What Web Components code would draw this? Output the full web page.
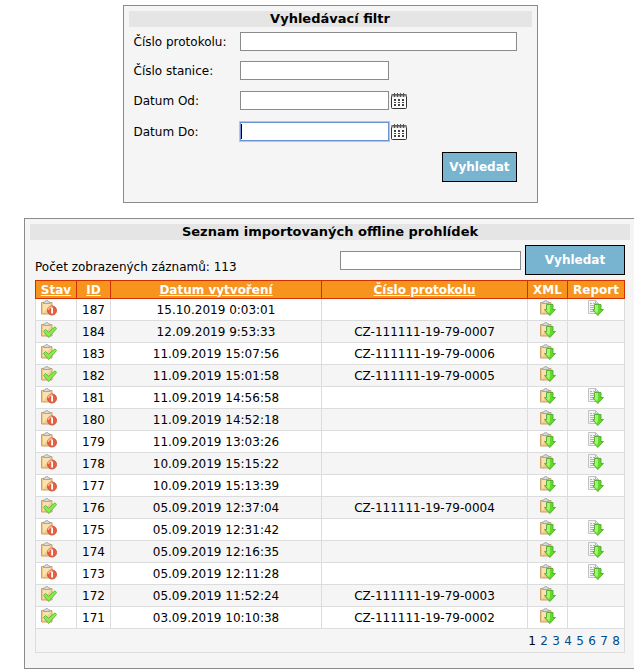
<!DOCTYPE html>
<html lang="cs">
<head>
<meta charset="utf-8">
<title>Offline prohlídky</title>
<style>
    body {
        margin: 0;
        background: #fff;
        color: #000;
        font: 12px/16px Verdana, 'DejaVu Sans', sans-serif;
        overflow-x: hidden;
    }
</style>
</head>
<body>
<offline-page></offline-page>

<script>
/**
 * all icons live on a 16x16 canvas
 */
const clipboard = `
    <path d="M.5 2.500h10.500v11.500H.5z" fill="#f0c987" stroke="#cda06a"/>
    <path d="M2 4h8v9H2z" fill="#fae2b0"/>
    <path d="M2 13l8-9v9z" fill="#f2cd8c"/>
    <path d="M2.500 3.500v-1.500h1.500q.2-1.500 1.700-1.500t1.800 1.500h1.500v1.500z" fill="#dcdee0" stroke="#a3a7ab"/>`

const arrow = `
    <path d="M6.500 4.500h6.500v5h2.500L9.800 15.500 4.500 9.500h2z" fill="#5fdc22" stroke="#5aae3c"/>
    <path d="M7 5h3v5.500l-1 3L6 10h1z" fill="#a4f375"/>`

const icons = {
    error: `${clipboard}
        <circle cx="11" cy="10.500" r="4.500" fill="#e6603f" stroke="#d1553b"/>
        <path d="M7.300 10q.4-3 3.700-3.200" fill="none" stroke="#f6b09c" stroke-width="1.500"/>
        <path d="M10.200 7.500h1.800v6h-1.800z" fill="#fff"/>`,
    ok: `${clipboard}
        <path d="M2.500 9.500l2-2 3 2.800 6.500-5.500 1.600 1.700-8 9z" fill="#86ee48" stroke="#62b840"/>`,
    xml: clipboard + arrow,
    report: `
        <path d="M.5.500h7l3 3v10H.5z" fill="#f4f4f4" stroke="#c2c2c2"/>
        <path d="M2 3.500h2M5 3.500h2M2 5.500h4M2 7.500h4M2 9.500h2M2 11.500h4" stroke="#b3b3b3"/>
        <path d="M7.500.500v3h3" fill="none" stroke="#b3b3b3"/>
        ${arrow}`,
    calendar: `
        <rect x=".5" y="1.500" width="15" height="14" rx="1" fill="#fafafa" stroke="#333"/>
        <path d="M0 2.500h16" stroke="#8a8a8a" stroke-width="2"/>
        <path d="M3.500 0v4M6.500 0v4M9.500 0v4M12.500 0v4" stroke="#555"/>
        <path d="M3 6h2v2H3zM7 6h2v2H7zM11 6h2v2h-2zM3 9h2v1H3zM7 9h2v1H7zM11 9h2v1h-2zM3 11h2v2H3zM7 11h2v2H7zM11 11h2v2h-2z" fill="#444"/>`
}

class AppIcon extends HTMLElement {
    connectedCallback() {
        this.attachShadow({ mode: 'open' })
        this.shadowRoot.innerHTML = `
            <style>
                :host { display: block; width: 16px; height: 16px; }
                svg { display: block; width: 100%; height: 100%; }
            </style>
            <svg viewBox="0 0 16 16" aria-hidden="true">${icons[this.getAttribute('name')]}</svg>
        `
    }
}

/**
 * grey box with a title bar, content comes through the slot
 */
class TitledPanel extends HTMLElement {
    connectedCallback() {
        this.attachShadow({ mode: 'open' })
        this.shadowRoot.innerHTML = `
            <style>
                :host {
                    display: block;
                    box-sizing: border-box;
                    border: 1px solid #8b8b8d;
                    background: #f5f5f5;
                    padding: 5px;
                }
                h2 {
                    margin: 0;
                    background: #e5e5e5;
                    font-size: 13px;
                    line-height: 16px;
                    text-align: center;
                }
            </style>
            <h2>${this.getAttribute('heading')}</h2>
            <slot></slot>
        `
    }
}

/* controls used by both forms */
const controls = `
    input {
        box-sizing: border-box;
        height: 19px;
        margin: 0;
        padding: 1px;
        border: 1px solid #8b8b8d;
        background: #fff;
        font: inherit;
    }
    .search {
        box-sizing: border-box;
        height: 30px;
        padding: 0 6px;
        border: 1px solid #000;
        background: #78b3d0;
        color: #fff;
        font: bold 12px/16px Verdana, 'DejaVu Sans', sans-serif;
        cursor: pointer;
    }
`

class FilterForm extends HTMLElement {
    connectedCallback() {
        this.attachShadow({ mode: 'open' })
        this.shadowRoot.innerHTML = `
            <style>
                ${controls}
                :host { display: block; padding: 0 15px 15px 5px; }
                .row {
                    display: grid;
                    grid-template-columns: 104px auto 16px 1fr;
                    align-items: center;
                    column-gap: 2px;
                    height: 29px;
                }
                .row.date { height: 31px; }
                .short { width: 149px; }
                .long { grid-column: 2 / -1; }
                .pick { padding: 0; border: 0; background: none; cursor: pointer; }
                /* the field being edited, with its caret */
                .active {
                    border-color: #6a92d4;
                    outline: 1px solid #a6c8fa;
                    background: linear-gradient(#000, #000) 0 1px / 1px 15px no-repeat #fff;
                }
                .actions { display: flex; justify-content: flex-end; padding-top: 5px; }
            </style>
            <div class="row">
                <label for="protocol">Číslo protokolu:</label>
                <input class="long" id="protocol">
            </div>
            <div class="row">
                <label for="station">Číslo stanice:</label>
                <input class="short" id="station">
            </div>
            <div class="row date">
                <label for="from">Datum Od:</label>
                <input class="short" id="from">
                <button class="pick" aria-label="Datum Od"><app-icon name="calendar"></app-icon></button>
            </div>
            <div class="row date">
                <label for="to">Datum Do:</label>
                <input class="short active" id="to">
                <button class="pick" aria-label="Datum Do"><app-icon name="calendar"></app-icon></button>
            </div>
            <div class="actions"><button class="search">Vyhledat</button></div>
        `
    }
}

class ListToolbar extends HTMLElement {
    connectedCallback() {
        this.attachShadow({ mode: 'open' })
        this.shadowRoot.innerHTML = `
            <style>
                ${controls}
                :host {
                    display: flex;
                    align-items: center;
                    gap: 4px;
                    padding: 5px 0;
                }
                label { flex: 1; align-self: flex-end; }
                input { width: 181px; }
                .search { width: 100px; }
            </style>
            <label for="query">Počet zobrazených záznamů: 113</label>
            <input id="query">
            <button class="search">Vyhledat</button>
        `
    }
}

/* id, date, protocol number (none when the import failed) */
const records = [
    [187, '15.10.2019 0:03:01', ''],
    [184, '12.09.2019 9:53:33', 'CZ-111111-19-79-0007'],
    [183, '11.09.2019 15:07:56', 'CZ-111111-19-79-0006'],
    [182, '11.09.2019 15:01:58', 'CZ-111111-19-79-0005'],
    [181, '11.09.2019 14:56:58', ''],
    [180, '11.09.2019 14:52:18', ''],
    [179, '11.09.2019 13:03:26', ''],
    [178, '10.09.2019 15:15:22', ''],
    [177, '10.09.2019 15:13:39', ''],
    [176, '05.09.2019 12:37:04', 'CZ-111111-19-79-0004'],
    [175, '05.09.2019 12:31:42', ''],
    [174, '05.09.2019 12:16:35', ''],
    [173, '05.09.2019 12:11:28', ''],
    [172, '05.09.2019 11:52:24', 'CZ-111111-19-79-0003'],
    [171, '03.09.2019 10:10:38', 'CZ-111111-19-79-0002']
]

class RecordTable extends HTMLElement {
    row([id, date, protocol]) {
        return `
            <tr>
                <td class="state"><app-icon name="${protocol ? 'ok' : 'error'}"></app-icon></td>
                <td>${id}</td>
                <td>${date}</td>
                <td>${protocol}</td>
                <td><a href="#" aria-label="XML"><app-icon name="xml"></app-icon></a></td>
                <td>${protocol ? '' : '<a href="#" aria-label="Report"><app-icon name="report"></app-icon></a>'}</td>
            </tr>`
    }

    connectedCallback() {
        const pages = [2, 3, 4, 5, 6, 7, 8].map(n => `<a href="#">${n}</a>`).join('')

        this.attachShadow({ mode: 'open' })
        this.shadowRoot.innerHTML = `
            <style>
                :host { display: block; }
                table {
                    width: 100%;
                    table-layout: fixed;
                    border-collapse: collapse;
                    text-align: center;
                }
                .w-state { width: 41px; }
                .w-id { width: 34px; }
                .w-date { width: 211px; }
                .w-xml { width: 40px; }
                .w-report { width: 57px; }
                th {
                    height: 17px;
                    padding: 0;
                    border: 1px solid #d03000;
                    background: #f7941d;
                    color: #fff;
                }
                th a { color: inherit; }
                td {
                    height: 21px;
                    padding: 0;
                    border: 1px solid #dcdcdc;
                }
                tbody tr { background: #fff; }
                tbody tr:nth-child(even) { background: #f5f5f5; }
                td app-icon { margin: 0 auto 3px; }
                .state app-icon { margin: 0 5px 3px; }
                tfoot td { height: 23px; }
                nav { display: flex; justify-content: flex-end; gap: 4px; padding-right: 4px; }
                nav * { width: 8px; }
                nav a { color: #004b8d; text-decoration: none; }
            </style>
            <table>
                <colgroup>
                    <col class="w-state"><col class="w-id"><col class="w-date">
                    <col><col class="w-xml"><col class="w-report">
                </colgroup>
                <thead>
                    <tr>
                        <th><a href="#">Stav</a></th>
                        <th><a href="#">ID</a></th>
                        <th><a href="#">Datum vytvoření</a></th>
                        <th><a href="#">Číslo protokolu</a></th>
                        <th>XML</th>
                        <th>Report</th>
                    </tr>
                </thead>
                <tbody>${records.map(this.row).join('')}</tbody>
                <tfoot>
                    <tr><td colspan="6"><nav><span>1</span>${pages}</nav></td></tr>
                </tfoot>
            </table>
        `
    }
}

class OfflinePage extends HTMLElement {
    connectedCallback() {
        this.attachShadow({ mode: 'open' })
        this.shadowRoot.innerHTML = `
            <style>
                /* the list runs slightly past the right edge of the window */
                :host {
                    display: flex;
                    flex-direction: column;
                    gap: 15px;
                    margin-right: -2px;
                    padding: 5px 0 2px 24px;
                }
                .filter { width: 415px; align-self: center; }
                .list { padding-bottom: 15px; }
                .content { padding: 0 5px; }
            </style>
            <titled-panel class="filter" heading="Vyhledávací filtr">
                <filter-form></filter-form>
            </titled-panel>
            <titled-panel class="list" heading="Seznam importovaných offline prohlídek">
                <div class="content">
                    <list-toolbar></list-toolbar>
                    <record-table></record-table>
                </div>
            </titled-panel>
        `
    }
}

window.customElements.define('app-icon', AppIcon)
window.customElements.define('titled-panel', TitledPanel)
window.customElements.define('filter-form', FilterForm)
window.customElements.define('list-toolbar', ListToolbar)
window.customElements.define('record-table', RecordTable)
window.customElements.define('offline-page', OfflinePage)
</script>
</body>
</html>
